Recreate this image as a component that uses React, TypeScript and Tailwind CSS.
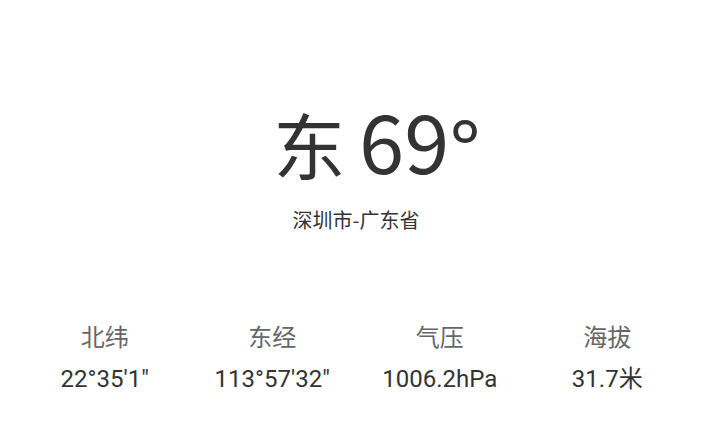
import React from 'react';

const stats = [
  { label: '北纬', value: '22°35\'1"' },
  { label: '东经', value: '113°57\'32"' },
  { label: '气压', value: '1006.2hPa' },
  { label: '海拔', value: '31.7米' },
];

const App: React.FC = () => {
  return (
    <div className="w-[712px] h-[440px] bg-white flex flex-col items-center overflow-hidden">
      {/* Heading */}
      <div
        className="mt-[89px] h-[100px] pl-[42px] flex items-baseline text-[#333333]"
        style={{ fontFamily: '"Noto Sans CJK SC", sans-serif' }}
      >
        <span className="text-[72px] leading-[100px]">东</span>
        <span className="ml-[14px] text-[81px] leading-[100px]">69</span>
        <span
          className="text-[74px] leading-[100px]"
          style={{ fontFamily: '"Noto Sans", sans-serif' }}
        >
          °
        </span>
      </div>
      <div
        className="mt-[17px] text-[20px] leading-[28px] text-[#333333]"
        style={{ fontFamily: '"Noto Sans CJK SC", sans-serif' }}
      >
        深圳市-广东省
      </div>

      {/* Stats */}
      <div
        className="mt-[88px] w-full px-[21px] grid grid-cols-4"
        style={{ fontFamily: 'Roboto, "Noto Sans CJK SC", sans-serif' }}
      >
        {stats.map((s) => (
          <div key={s.label} className="flex flex-col items-center">
            <div className="text-[24px] leading-[32px] text-[#666666]">{s.label}</div>
            <div className="mt-[9px] text-[24px] leading-[32px] text-[#333333]">{s.value}</div>
          </div>
        ))}
      </div>
    </div>
  );
};

export default App;
